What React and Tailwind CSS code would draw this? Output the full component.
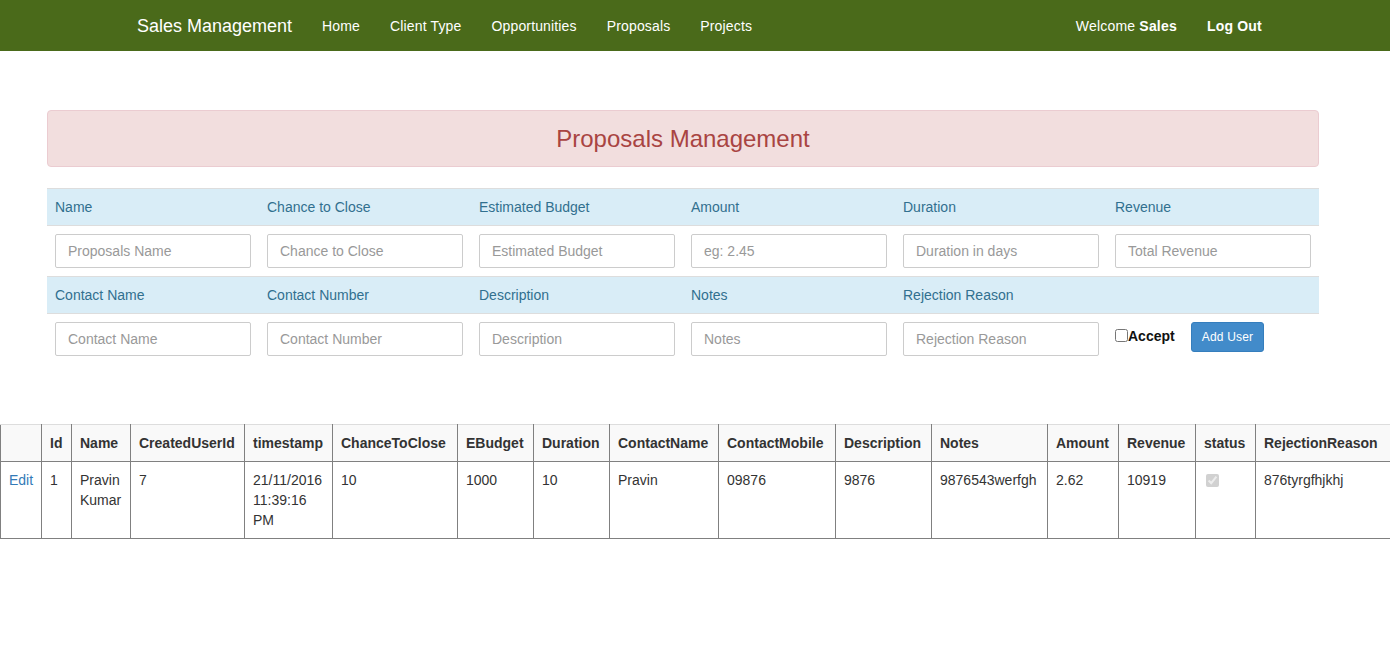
import React from "react";

const font = { fontFamily: '"Liberation Sans", Arial, sans-serif' };

function Input({ placeholder }) {
  return (
    <input
      type="text"
      placeholder={placeholder}
      className="block w-[196px] h-[34px] border border-[#cccccc] rounded-[2px] px-[12px] text-[14px] text-[#555] placeholder:text-[#999] bg-white outline-none"
    />
  );
}

const labels1 = ["Name", "Chance to Close", "Estimated Budget", "Amount", "Duration", "Revenue"];
const ph1 = ["Proposals Name", "Chance to Close", "Estimated Budget", "eg: 2.45", "Duration in days", "Total Revenue"];
const labels2 = ["Contact Name", "Contact Number", "Description", "Notes", "Rejection Reason", ""];
const ph2 = ["Contact Name", "Contact Number", "Description", "Notes", "Rejection Reason"];

const cols = [
  ["", 41],
  ["Id", 30],
  ["Name", 59],
  ["CreatedUserId", 114],
  ["timestamp", 88],
  ["ChanceToClose", 125],
  ["EBudget", 76],
  ["Duration", 76],
  ["ContactName", 109],
  ["ContactMobile", 117],
  ["Description", 96],
  ["Notes", 116],
  ["Amount", 71],
  ["Revenue", 77],
  ["status", 60],
  ["RejectionReason", 135],
];

export default function App() {
  return (
    <div style={font} className="min-h-[645px] bg-white text-[#333] text-[14px] leading-[20px]">
      <nav className="h-[51px] bg-[#4a6a1a]">
        <div className="ml-[107px] w-[1170px] h-full flex items-center justify-between">
          <div className="flex items-center">
            <span className="px-[15px] ml-[15px] text-[18px] text-white">Sales Management</span>
            {["Home", "Client Type", "Opportunities", "Proposals", "Projects"].map((l) => (
              <span key={l} className="px-[15px] text-white tracking-[0.15px]">{l}</span>
            ))}
          </div>
          <div className="flex items-center">
            <span className="px-[15px] text-white tracking-[0.2px]">
              Welcome <b>Sales</b>
            </span>
            <span className="px-[15px] text-white font-bold tracking-[0.2px]">Log Out</span>
          </div>
        </div>
      </nav>

      <div className="ml-[47px] w-[1272px] pt-[59px]">
        <div className="h-[57px] bg-[#f2dede] border border-[#ebccd1] rounded-[4px] flex items-center justify-center text-[#a94442] text-[24px]">
          Proposals Management
        </div>

        <table className="mt-[21px] w-[1272px] table-fixed border-collapse">
          <tbody>
            <tr className="bg-[#d9edf7]">
              {labels1.map((l, i) => (
                <td key={i} className="w-[212px] border-t border-[#dddddd] px-[8px] py-[8px] text-[#31708f]">{l}</td>
              ))}
            </tr>
            <tr>
              {ph1.map((p, i) => (
                <td key={i} className="border-t border-[#dddddd] p-[8px]"><Input placeholder={p} /></td>
              ))}
            </tr>
            <tr className="bg-[#d9edf7]">
              {labels2.map((l, i) => (
                <td key={i} className="border-t border-[#dddddd] px-[8px] py-[8px] text-[#31708f] h-[37px]">{l}</td>
              ))}
            </tr>
            <tr>
              {ph2.map((p, i) => (
                <td key={i} className="border-t border-[#dddddd] p-[8px]"><Input placeholder={p} /></td>
              ))}
              <td className="border-t border-[#dddddd] p-[8px] align-top">
                <div className="flex items-start">
                  <input type="checkbox" className="w-[13px] h-[13px] mt-[7px] m-0" />
                  <span className="font-bold text-[#111] mt-[4px]">Accept</span>
                  <button className="ml-[16px] h-[30px] px-[10px] text-[12px] tracking-[0.2px] text-white bg-[#428bca] border border-[#357ebd] rounded-[3px]">
                    Add User
                  </button>
                </div>
              </td>
            </tr>
          </tbody>
        </table>
      </div>

      <table className="mt-[60px] w-[1390px] table-fixed border-collapse">
        <colgroup>
          {cols.map(([n, w], i) => (
            <col key={i} style={{ width: w }} />
          ))}
        </colgroup>
        <thead>
          <tr className="bg-[#f9f9f9]">
            {cols.map(([n], i) => (
              <th key={i} className="text-left font-bold px-[8px] py-[8px] border-t border-t-[#dddddd] border-b border-b-[#808080] border-x border-x-[#808080] text-[#333] whitespace-nowrap">
                {n}
              </th>
            ))}
          </tr>
        </thead>
        <tbody>
          <tr>
            {[
              <span className="text-[#337ab7]">Edit</span>,
              "1",
              "Pravin Kumar",
              "7",
              <>21/11/2016<br />11:39:16<br />PM</>,
              "10",
              "1000",
              "10",
              "Pravin",
              "09876",
              "9876",
              "9876543werfgh",
              "2.62",
              "10919",
              <input type="checkbox" checked disabled readOnly className="w-[13px] h-[13px] mt-[4px] ml-[2px]" />,
              "876tyrgfhjkhj",
            ].map((c, i) => (
              <td key={i} className="align-top px-[8px] pt-[8px] pb-[8px] h-[77px] border border-[#808080]">
                {c}
              </td>
            ))}
          </tr>
        </tbody>
      </table>
    </div>
  );
}
